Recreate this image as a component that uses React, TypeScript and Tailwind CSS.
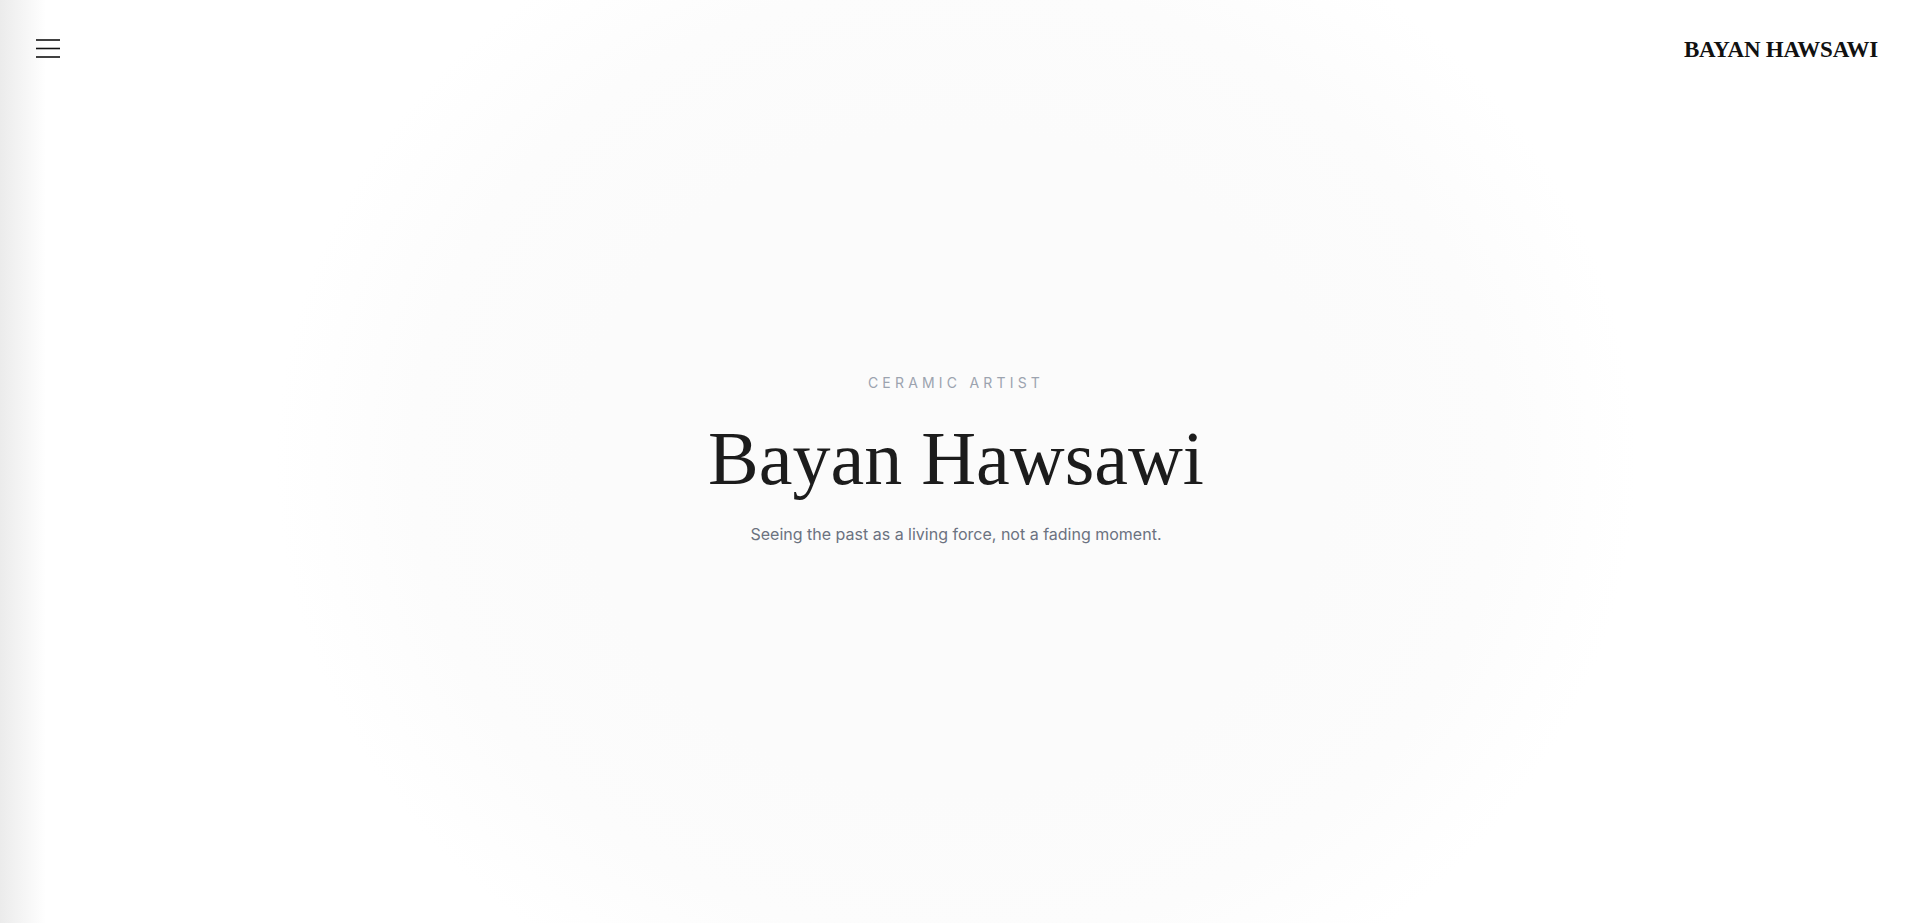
import React from 'react';

const MenuIcon = () => (
  <svg width="24" height="20" viewBox="0 0 24 20" fill="none" stroke="#111111" strokeWidth="1.6" aria-hidden="true">
    <line x1="0" y1="1" x2="24" y2="1" />
    <line x1="0" y1="9.5" x2="24" y2="9.5" />
    <line x1="0" y1="18" x2="24" y2="18" />
  </svg>
);

export default function App() {
  return (
    <div className="relative h-screen w-full overflow-hidden bg-white font-['Inter','Noto_Sans',sans-serif]">
      {/* soft backdrop glow */}
      <div className="pointer-events-none absolute inset-0 bg-[radial-gradient(ellipse_680px_600px_at_50%_50%,#fbfbfb_0%,#fbfbfb_55%,#fcfcfc_80%,#ffffff_100%)]" />
      <div className="pointer-events-none absolute inset-y-0 left-0 w-[46px] bg-gradient-to-r from-[#ebebeb] via-[#f5f5f5] to-transparent" />

      <header className="absolute inset-x-0 top-0 z-10 flex items-center justify-between pl-9 pr-[34px] pt-[36px]">
        <button className="block" aria-label="Open menu">
          <MenuIcon />
        </button>
        <a href="#" className="mt-[2px] font-['Liberation_Serif','Times_New_Roman',serif] text-[23px] font-bold leading-none tracking-[-0.01em] text-[#111111]">
          BAYAN HAWSAWI
        </a>
      </header>

      <main className="relative flex h-full flex-col items-center justify-center pb-1 text-center">
        <p className="text-sm leading-5 tracking-[0.3em] text-[#9ca3af] uppercase">Ceramic Artist</p>
        <h1 className="mt-[27px] font-['Liberation_Serif','Times_New_Roman',serif] text-[76px] font-normal leading-[76px] text-[#1c1c1c]">
          Bayan Hawsawi
        </h1>
        <p className="mt-[26px] text-base leading-6 text-[#6b7280]">
          Seeing the past as a living force, not a fading moment.
        </p>
      </main>
    </div>
  );
}
